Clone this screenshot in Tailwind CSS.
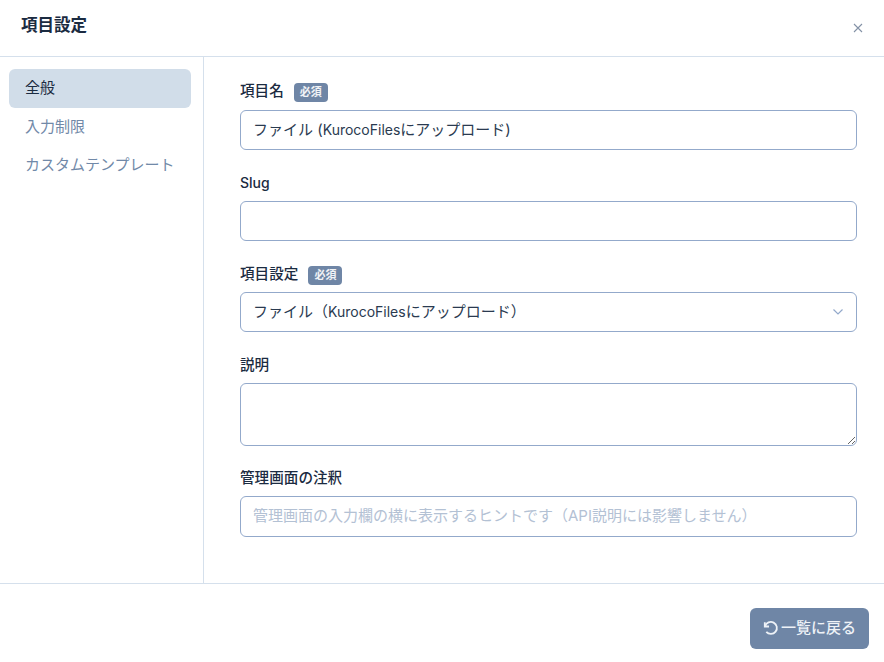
<!DOCTYPE html>
<html lang="ja"><head><meta charset="utf-8">
<script src="https://cdn.jsdelivr.net/npm/@tailwindcss/browser@4"></script>
</head>
<body class="bg-white">
<div class="flex h-[662px] w-[884px] flex-col overflow-hidden bg-white font-['Inter','Noto_Sans_CJK_JP',sans-serif] text-[#1e293b]">
  <header class="flex h-[57px] shrink-0 items-center justify-between border-b border-[#d5e0ec] pl-[21px] pr-[21px]">
    <h1 class="pb-[7px] text-[16.500px] leading-6 font-bold text-[#1b2b41]">項目設定</h1>
    <svg class="h-[10px] w-[10px] text-[#8492a6]" viewBox="0 0 10 10" fill="none" stroke="currentColor" stroke-width="1.1"><path d="M1 1l8 8M9 1l-8 8"/></svg>
  </header>
  <div class="flex h-[526px] shrink-0">
    <nav class="flex w-[204px] shrink-0 flex-col border-r border-[#d5e0ec] pl-[9px] pr-[12px] pt-[12px] text-[15px]">
      <a class="flex h-[39px] items-center rounded-[6px] bg-[#d1dde9] pb-[1px] pl-[16px] text-[#1b2b41]">全般</a>
      <a class="flex h-[38px] items-center pl-[16px] text-[#7189a8]">入力制限</a>
      <a class="flex h-[38px] items-center pl-[16px] text-[#7189a8]">カスタムテンプレート</a>
    </nav>
    <main class="flex-1 pl-[36px] pr-[27px] pt-[26px] text-[15px] text-[#1b2b41]">
      <div class="flex h-[27px] items-start gap-[10px] font-medium">
        <span class="text-[14.600px] leading-[16px]">項目名</span>
        <span class="rounded-[4px] bg-[#6f86a6] px-[6px] text-[11px] leading-[19px] font-bold text-white/90">必須</span>
      </div>
      <div class="flex h-[40px] items-center rounded-[6px] border border-[#93a9cb] px-[12px] text-[#2a3a50]"><span>ファイル (<span class="text-[14px]">KurocoFiles</span>にアップロード)</span></div>
      <div class="mt-[25px] h-[26px] text-[14.600px] font-medium leading-[16px]"><span class="text-[14px]">Slug</span></div>
      <div class="h-[40px] rounded-[6px] border border-[#93a9cb]"></div>
      <div class="mt-[25px] flex h-[26px] items-start gap-[10px] font-medium">
        <span class="text-[14.600px] leading-[16px]">項目設定</span>
        <span class="rounded-[4px] bg-[#6f86a6] px-[6px] text-[11px] leading-[19px] font-bold text-white/90">必須</span>
      </div>
      <div class="flex h-[40px] items-center justify-between rounded-[6px] border border-[#93a9cb] pl-[12px] pr-[13px] text-[#2a3a50]">
        <span>ファイル（<span class="text-[14px]">KurocoFiles</span>にアップロード）</span>
        <svg class="h-[6px] w-[10px] text-[#93a9cb]" viewBox="0 0 10 6" fill="none" stroke="currentColor" stroke-width="1.2"><path d="M.5.5 5 5 9.500.5"/></svg>
      </div>
      <div class="mt-[25px] h-[26px] text-[14.600px] font-medium leading-[16px]">説明</div>
      <textarea class="block h-[63px] w-full rounded-[6px] border border-[#93a9cb]"></textarea>
      <div class="mt-[24px] h-[26px] text-[14.600px] font-medium leading-[16px]">管理画面の注釈</div>
      <div class="flex h-[41px] items-center rounded-[6px] border border-[#93a9cb] px-[12px] pb-[1px] text-[#b3c1d4]">管理画面の入力欄の横に表示するヒントです（API説明には影響しません）</div>
    </main>
  </div>
  <footer class="flex flex-1 justify-end border-t border-[#d5e0ec] pr-[15px] pt-[24px]">
    <button class="flex h-[41px] w-[119px] items-center justify-center gap-[2px] rounded-[6px] bg-[#6f86a6] pb-[1px] text-[15px] font-medium text-[#eef2f7]">
      <svg class="h-[16px] w-[16px]" viewBox="0 0 16 16" fill="none" stroke="currentColor" stroke-width="1.8"><path d="M1.800 2.300v4.200H6"/><path d="M2.100 6.300A6 6 0 1 1 3.300 11.800"/></svg>
      <span>一覧に戻る</span>
    </button>
  </footer>
</div>
</body></html>
